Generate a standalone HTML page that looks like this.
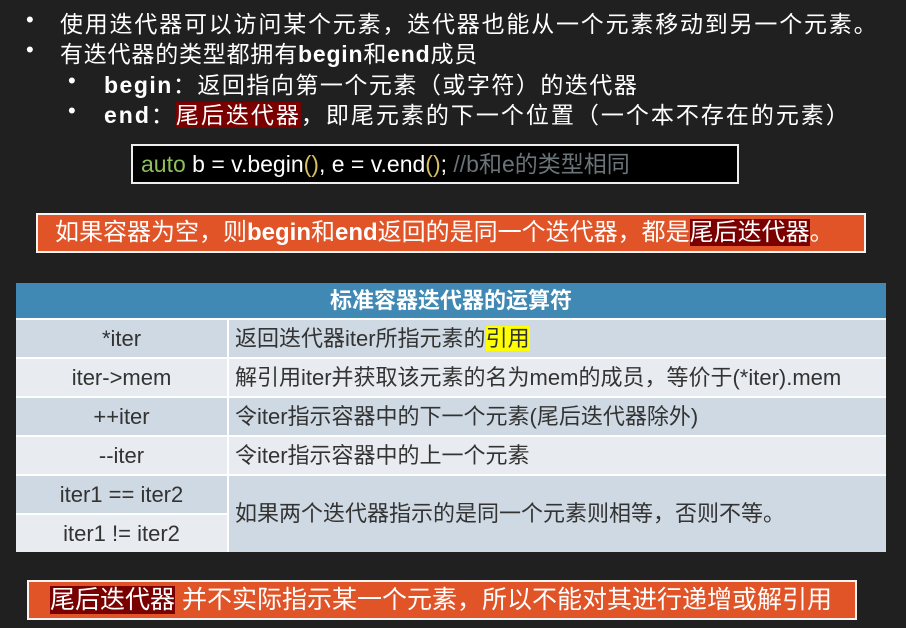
<!DOCTYPE html>
<html><head><meta charset="utf-8"><style>
body{margin:0;width:906px;height:628px;background:#202020;position:relative;overflow:hidden;font-family:"Liberation Sans","Noto Sans CJK SC",sans-serif;color:#fff}
.a{position:absolute;white-space:nowrap}
.l1{font-size:23px;letter-spacing:1.8px}
.dot{font-size:22px}
.hl{background:#7a0000}
td{padding:0;font-size:22px;color:#333;height:37px;border-bottom:2px solid #fff;line-height:24px}
</style></head><body>
<div class="a dot" style="left:26px;top:7px">•</div>
<div class="a l1" style="left:60px;top:5px">使用迭代器可以访问某个元素，迭代器也能从一个元素移动到另一个元素。</div>
<div class="a dot" style="left:26px;top:37px">•</div>
<div class="a l1" style="left:60px;top:35px;letter-spacing:0.8px">有迭代器的类型都拥有<b>begin</b>和<b>end</b>成员</div>
<div class="a dot" style="left:68px;top:68px">•</div>
<div class="a l1" style="left:104px;top:66px;letter-spacing:1.5px"><b>begin</b>：返回指向第一个元素（或字符）的迭代器</div>
<div class="a dot" style="left:68px;top:98px">•</div>
<div class="a l1" style="left:104px;top:96px;letter-spacing:2px"><b>end</b>：<span class="hl">尾后迭代器</span>，即尾元素的下一个位置（一个本不存在的元素）</div>
<div class="a" style="left:131px;top:144px;height:36px;background:#000;border:2px solid #eee;font-size:23px;line-height:36px;padding-left:8px;width:596px"><span style="color:#8fbf5a">auto</span> b = v.begin<span style="color:#d8c060">()</span>, e = v.end<span style="color:#d8c060">()</span>; <span style="color:#6a7378">//b和e的类型相同</span></div>
<div class="a" style="left:36px;top:213px;background:#e05428;border:2px solid #f4f4f4;font-size:24px;line-height:36px;padding-left:17px;box-sizing:border-box;height:40px;width:830px">如果容器为空，则<b>begin</b>和<b>end</b>返回的是同一个迭代器，都是<span class="hl">尾后迭代器</span>。</div>
<table class="a" style="left:16px;top:283px;width:870px;border-collapse:collapse">
<tr><td colspan="2" style="background:#3f89b4;color:#fff;text-align:center;font-weight:bold;height:35px">标准容器迭代器的运算符</td></tr>
<tr style="background:#cfd9e3"><td style="width:211px;text-align:center;border-right:2px solid #fff">*iter</td><td style="padding-left:6px">返回迭代器iter所指元素的<span style="background:#ffff00">引用</span></td></tr>
<tr style="background:#e8ecf0"><td style="text-align:center;border-right:2px solid #fff">iter-&gt;mem</td><td style="padding-left:6px">解引用iter并获取该元素的名为mem的成员，等价于(*iter).mem</td></tr>
<tr style="background:#cfd9e3"><td style="text-align:center;border-right:2px solid #fff">++iter</td><td style="padding-left:6px">令iter指示容器中的下一个元素(尾后迭代器除外)</td></tr>
<tr style="background:#e8ecf0"><td style="text-align:center;border-right:2px solid #fff">--iter</td><td style="padding-left:6px">令iter指示容器中的上一个元素</td></tr>
<tr><td style="text-align:center;border-right:2px solid #fff;background:#cfd9e3">iter1 == iter2</td><td rowspan="2" style="padding-left:6px;background:#cfd9e3;border-bottom:none">如果两个迭代器指示的是同一个元素则相等，否则不等。</td></tr>
<tr><td style="text-align:center;border-right:2px solid #fff;background:#e8ecf0;border-bottom:none">iter1 != iter2</td></tr>
</table>
<div class="a" style="left:27px;top:580px;width:830px;height:40px;background:#e05428;border:2px solid #f4f4f4;font-size:25px;line-height:36px;padding-left:21px;box-sizing:border-box"><span class="hl">尾后迭代器</span> 并不实际指示某一个元素，所以不能对其进行递增或解引用</div>
</body></html>
